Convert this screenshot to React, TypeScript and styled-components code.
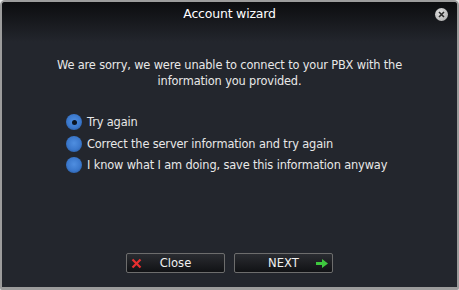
import React from "react";
import styled, { createGlobalStyle } from "styled-components";

const Global = createGlobalStyle`
  html, body { margin: 0; padding: 0; background: #e8e8e8; }
  body { font-family: Tahoma, "DejaVu Sans", sans-serif; }
`;

const Window = styled.div`
  box-sizing: border-box;
  width: 459px;
  height: 290px;
  border: 2px solid #9c9c9c;
  border-bottom-width: 3px;
  border-radius: 5px 5px 2px 2px;
  background: #23262d;
  display: flex;
  flex-direction: column;
  overflow: hidden;
`;

const TitleBar = styled.div`
  position: relative;
  height: 40px;
  flex: none;
  background: linear-gradient(#0c0d0f, #1a1c21 60%, #23262d);
  display: flex;
  justify-content: center;
  padding-top: 4px;
  box-sizing: border-box;
  color: #ffffff;
  font-size: 12.5px;
  font-family: "DejaVu Sans", sans-serif;
  letter-spacing: -0.2px;
`;

const CloseDot = styled.div`
  position: absolute;
  right: 9px;
  top: 6px;
  width: 13px;
  height: 13px;
  border-radius: 50%;
  background: radial-gradient(circle at 40% 35%, #e0e0e0, #a8a8a8);
  display: flex;
  align-items: center;
  justify-content: center;
`;

const Body = styled.div`
  flex: 1;
  display: flex;
  flex-direction: column;
  padding: 15px 0 0;
`;

const Message = styled.p`
  margin: 0;
  text-align: center;
  color: #e8e8e8;
  font-family: "DejaVu Sans", sans-serif;
  font-size: 11.4px;
  line-height: 16px;
  letter-spacing: -0.15px;
`;

const Options = styled.div`
  display: flex;
  flex-direction: column;
  gap: 5px;
  padding: 25px 0 0 64px;
`;

const Option = styled.label`
  display: flex;
  align-items: center;
  gap: 5px;
  color: #e8e8e8;
  font-family: "DejaVu Sans", sans-serif;
  font-size: 11.4px;
  letter-spacing: -0.15px;
  height: 16.5px;
`;

const Radio = styled.span<{ $checked?: boolean }>`
  width: 16px;
  height: 16px;
  border-radius: 50%;
  background: radial-gradient(circle at 50% 45%, #4f8ee0 0%, #3b78cc 55%, #1f4d8e 100%);
  display: flex;
  align-items: center;
  justify-content: center;
  &::after {
    content: "";
    display: ${(p) => (p.$checked ? "block" : "none")};
    width: 5px;
    height: 5px;
    border-radius: 50%;
    background: #0a1422;
  }
`;

const Footer = styled.div`
  margin-top: auto;
  display: flex;
  justify-content: center;
  gap: 9px;
  padding: 0 0 14px 0;
`;

const Button = styled.button`
  box-sizing: border-box;
  width: 99px;
  height: 20px;
  border: 1px solid #6d6d6d;
  border-radius: 2px;
  background: linear-gradient(#2a2c31, #111215);
  color: #f0f0f0;
  font-family: "DejaVu Sans", sans-serif;
  font-size: 11.6px;
  position: relative;
  display: flex;
  align-items: center;
  justify-content: center;
  padding: 0;
`;

const IconLeft = styled.span`
  position: absolute;
  left: 4px;
  top: 4px;
  display: flex;
`;

const IconRight = styled.span`
  position: absolute;
  right: 4px;
  top: 5px;
  display: flex;
`;

export default function App() {
  return (
    <>
      <Global />
      <Window>
        <TitleBar>
          Account wizard
          <CloseDot>
            <svg width="7" height="7" viewBox="0 0 7 7">
              <path d="M1 1L6 6M6 1L1 6" stroke="#2a2a2a" strokeWidth="1.6" />
            </svg>
          </CloseDot>
        </TitleBar>
        <Body>
          <Message>
            We are sorry, we were unable to connect to your PBX with the
            <br />
            information you provided.
          </Message>
          <Options>
            <Option>
              <Radio $checked />
              Try again
            </Option>
            <Option>
              <Radio />
              Correct the server information and try again
            </Option>
            <Option>
              <Radio />
              I know what I am doing, save this information anyway
            </Option>
          </Options>
          <Footer>
            <Button>
              <IconLeft>
                <svg width="11" height="11" viewBox="0 0 11 11">
                  <path d="M1.5 1.5L9.5 9.5M9.5 1.5L1.5 9.5" stroke="#e83030" strokeWidth="2.2" />
                </svg>
              </IconLeft>
              Close
            </Button>
            <Button>
              NEXT
              <IconRight>
                <svg width="12" height="9" viewBox="0 0 12 9">
                  <path d="M0 3H6V0L12 4.5L6 9V6H0Z" fill="#3ec83e" />
                </svg>
              </IconRight>
            </Button>
          </Footer>
        </Body>
      </Window>
    </>
  );
}
